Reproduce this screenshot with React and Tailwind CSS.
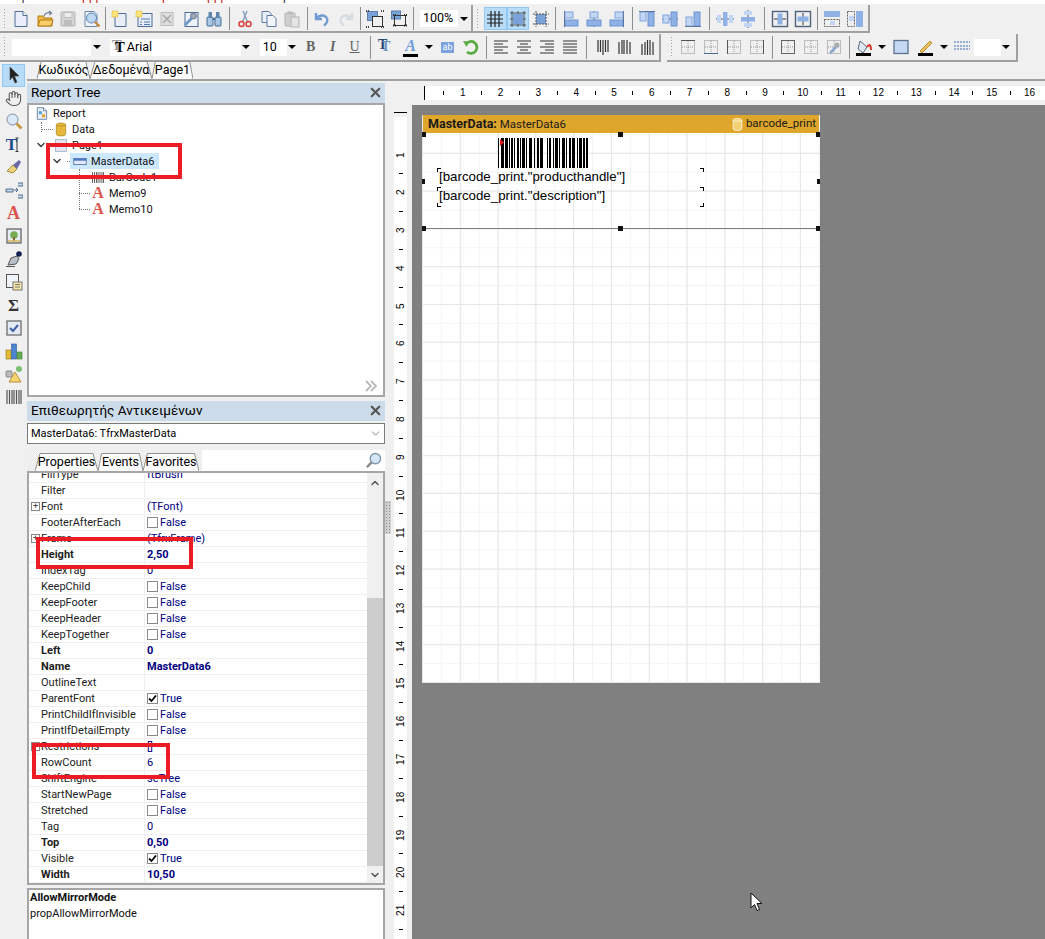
import React from 'react';
import { X, ChevronDown, ChevronUp, Hand } from 'lucide-react';

const SANS = "font-['Roboto',sans-serif]";
const ARIAL = "font-['Liberation_Sans',Arial,sans-serif]";
const SERIF = "font-['Liberation_Serif',serif]";

const Svg = ({ s = 18, children }) => (
    <svg width={s} height={s} viewBox="0 0 18 18" fill="none">{children}</svg>
);

const Page = ({ c = '#4f6d94', f = '#e9eefa' }) => (
    <>
        <path d="M3 1.5h8l4 4v11H3z" fill={f} stroke={c} />
        <path d="M11 1.5v4h4" fill="#fff" stroke={c} />
    </>
);

const Frame = ({ l, r, t, b, m }) => (
    <>
        <rect x="2.5" y="2.5" width="13" height="13" stroke="#888" strokeDasharray="1 1" />
        <path d="M9 3v12M3 9h12" stroke="#999" strokeDasharray="1 1" />
        {l && <path d="M2.5 2v14" stroke="#555" />}
        {r && <path d="M15.5 2v14" stroke="#555" />}
        {t && <path d="M2 2.5h14" stroke="#555" />}
        {b && <path d="M2 15.5h14" stroke="#4a6a94" />}
        {m && <rect x="2.5" y="2.5" width="13" height="13" stroke="#666" />}
    </>
);

// all toolbar and palette drawings
const icons = {
    new: <Page />,
    open: (
        <>
            <path d="M2 6h5l1 2h8v8H2z" fill="#f3bb45" stroke="#b37a12" />
            <path d="M2 16l2-6h13l-2 6z" fill="#f8cf6c" stroke="#b37a12" />
            <path d="M8 6c1-3 4-4 7-3M13 1l2.500 2-2 2" stroke="#6d7f97" strokeWidth="1.200" />
        </>
    ),
    save: (
        <>
            <rect x="2" y="2" width="14" height="14" rx="1" fill="#d4d4d4" stroke="#b4b4b4" />
            <rect x="5" y="2.500" width="8" height="5" fill="#ececec" stroke="#bbb" />
            <rect x="5" y="10" width="8" height="6" fill="#bdbdbd" />
        </>
    ),
    preview: (
        <>
            <path d="M2 1.500h9l3 3v12H2z" fill="#eef2fb" stroke="#6d86a8" />
            <circle cx="8.500" cy="8" r="5" fill="#bcd7f2" stroke="#5a82ad" />
            <path d="M12 12l4.500 4.500" stroke="#c9853a" strokeWidth="2.400" />
        </>
    ),
    pageNew: (
        <>
            <path d="M4 3.500h11v13H4z" fill="#e9eefa" stroke="#4f6d94" />
            <rect x="1" y="1" width="6" height="6" fill="#fbe27a" stroke="#d7b52c" strokeDasharray="1 1" />
        </>
    ),
    dialog: (
        <>
            <rect x="3" y="3.500" width="14" height="13" fill="#e9eefa" stroke="#4f6d94" />
            <rect x="1" y="1" width="6" height="6" fill="#fbe27a" stroke="#d7b52c" strokeDasharray="1 1" />
            <path d="M6 9h9M9 12h6M9 14.500h6M5 12h2M5 14.500h2" stroke="#4f7db0" />
        </>
    ),
    delPage: (
        <>
            <rect x="3" y="2.500" width="12" height="13" fill="#dedede" stroke="#bcbcbc" />
            <path d="M5 5l8 8M13 5l-8 8" stroke="#a8a8a8" strokeWidth="1.500" />
        </>
    ),
    wrench: (
        <>
            <rect x="3" y="2.500" width="13" height="14" fill="#eef2fb" stroke="#4f6d94" />
            <path d="M3 15l7-7" stroke="#6b96c7" strokeWidth="2.600" />
            <circle cx="11.500" cy="6" r="3" fill="#9fa8b4" stroke="#6d7f97" />
        </>
    ),
    find: (
        <>
            <rect x="2" y="7" width="6" height="9" rx="1" fill="#a9c8e8" stroke="#45698f" />
            <rect x="10" y="7" width="6" height="9" rx="1" fill="#a9c8e8" stroke="#45698f" />
            <rect x="3.500" y="2" width="3.500" height="6" fill="#5f86b0" />
            <rect x="11" y="2" width="3.500" height="6" fill="#5f86b0" />
            <path d="M8 9h2" stroke="#45698f" strokeWidth="2" />
        </>
    ),
    cut: (
        <>
            <path d="M11 1L6.500 12M7 1l4.500 11" stroke="#8da2bc" strokeWidth="1.500" />
            <circle cx="5.500" cy="14" r="2.500" stroke="#d8403a" strokeWidth="1.500" />
            <circle cx="12.500" cy="14" r="2.500" stroke="#d8403a" strokeWidth="1.500" />
        </>
    ),
    copy: (
        <>
            <path d="M2 1.500h7l2 2v9H2z" fill="#e9eefa" stroke="#5d7ba1" />
            <path d="M7 5.500h6l3 3v8H7z" fill="#f2f5fc" stroke="#5d7ba1" />
        </>
    ),
    paste: (
        <>
            <rect x="2" y="3" width="10" height="13" rx="1" fill="#cfcfcf" stroke="#b2b2b2" />
            <rect x="4.500" y="1.500" width="5" height="3" fill="#bbb" />
            <rect x="8" y="7" width="8" height="10" fill="#e4e4e4" stroke="#b4b4b4" />
        </>
    ),
    undo: <path d="M3 3v6h6M3.500 8.500C6 5 11 4.500 13.500 7.500c2 2.500.5 6-2.500 8" stroke="#6f9bd4" strokeWidth="2.400" />,
    redo: <path d="M15 3v6H9M14.500 8.500C12 5 7 4.500 4.500 7.500c-2 2.500-.5 6 2.500 8" stroke="#d6dbe0" strokeWidth="2.400" />,
    group: (
        <>
            <rect x="1.500" y="1.500" width="10" height="9" fill="#7ba2d8" stroke="#5b7fae" />
            <rect x="6.500" y="6.500" width="10" height="10" fill="#f0f0f0" stroke="#333" />
            <path d="M0 1h3M0 17h3M15 1h3M15 17h3" stroke="#444" strokeWidth="2" strokeDasharray="1 1" />
        </>
    ),
    ungroup: (
        <>
            <rect x="1.500" y="1" width="9" height="8" fill="#7ba2d8" stroke="#5b7fae" />
            <rect x="4.500" y="5.500" width="11" height="10" stroke="#333" />
            <path d="M3 5h3M14 5h3M3 15.500h3M14 15.500h3" stroke="#333" strokeWidth="2" strokeDasharray="1 1" />
        </>
    ),
    grid: <path d="M5 1v16M9 1v16M13 1v16M1 5h16M1 9h16M1 13h16" stroke="#222" strokeWidth="1.200" />,
    gridFit: (
        <>
            <rect x="4" y="4" width="10" height="10" fill="#7ba2d8" />
            <path d="M1 3h16M1 15h16M3 1v16M15 1v16" stroke="#333" strokeWidth=".8" />
            <path d="M9 1v3M9 14v3M1 9h3M14 9h3" stroke="#555" />
        </>
    ),
    gridAlign: (
        <>
            <rect x="4" y="4" width="10" height="10" fill="#7ba2d8" />
            <path d="M1 4h16M1 14h16M4 1v16M14 1v16" stroke="#555" strokeDasharray="2 1" />
        </>
    ),
    alLeft: (
        <>
            <path d="M2.500 1v16" stroke="#4a5a70" />
            <rect x="3" y="2" width="8" height="6" fill="#c3d6f3" stroke="#7fa3dc" />
            <rect x="3" y="10" width="13" height="6" fill="#8fb1e6" stroke="#6b92d0" />
        </>
    ),
    alCenter: (
        <>
            <path d="M9 1v16" stroke="#4a5a70" />
            <rect x="5" y="2" width="8" height="6" fill="#c3d6f3" stroke="#7fa3dc" />
            <rect x="2" y="10" width="14" height="6" fill="#8fb1e6" stroke="#6b92d0" />
        </>
    ),
    alRight: (
        <>
            <path d="M15.500 1v16" stroke="#4a5a70" />
            <rect x="7" y="2" width="8" height="6" fill="#c3d6f3" stroke="#7fa3dc" />
            <rect x="2" y="10" width="13" height="6" fill="#8fb1e6" stroke="#6b92d0" />
        </>
    ),
    alTop: (
        <>
            <path d="M1 1.500h16" stroke="#4a5a70" />
            <rect x="2" y="2" width="6" height="9" fill="#c3d6f3" stroke="#7fa3dc" />
            <rect x="10" y="2" width="6" height="14" fill="#8fb1e6" stroke="#6b92d0" />
        </>
    ),
    alMid: (
        <>
            <path d="M1 9h16" stroke="#4a5a70" />
            <rect x="2" y="5" width="6" height="8" fill="#c3d6f3" stroke="#7fa3dc" />
            <rect x="10" y="2" width="6" height="14" fill="#8fb1e6" stroke="#6b92d0" />
        </>
    ),
    alBottom: (
        <>
            <path d="M1 16.500h16" stroke="#4a5a70" />
            <rect x="2" y="7" width="6" height="9" fill="#c3d6f3" stroke="#7fa3dc" />
            <rect x="10" y="2" width="6" height="14" fill="#8fb1e6" stroke="#6b92d0" />
        </>
    ),
    spaceH: (
        <>
            <path d="M0 9h18" stroke="#4a5a70" />
            <rect x="1" y="5" width="4" height="8" fill="#c3d6f3" />
            <rect x="7" y="2" width="4.500" height="14" fill="#8fb1e6" />
            <rect x="13" y="5" width="4" height="8" fill="#c3d6f3" />
        </>
    ),
    spaceV: (
        <>
            <path d="M9 0v18" stroke="#4a5a70" />
            <rect x="5" y="1" width="8" height="4" fill="#c3d6f3" />
            <rect x="2" y="7" width="14" height="4.500" fill="#8fb1e6" />
            <rect x="5" y="13" width="8" height="4" fill="#c3d6f3" />
        </>
    ),
    centerH: (
        <>
            <rect x="1.500" y="1.500" width="15" height="15" stroke="#4f6378" strokeWidth="1.400" />
            <path d="M3 9h12" stroke="#333" />
            <rect x="6.500" y="3.500" width="5" height="11" fill="#8fb1e6" />
        </>
    ),
    centerV: (
        <>
            <rect x="1.500" y="1.500" width="15" height="15" stroke="#4f6378" strokeWidth="1.400" />
            <path d="M9 3v12" stroke="#333" />
            <rect x="3.500" y="6.500" width="11" height="5" fill="#8fb1e6" />
        </>
    ),
    sameW: (
        <>
            <rect x="1" y="1" width="16" height="6" fill="#8fb1e6" />
            <rect x="1.500" y="9.500" width="15" height="7" stroke="#666" strokeDasharray="2 1" />
            <rect x="7" y="11" width="5" height="4" fill="#c3d6f3" />
        </>
    ),
    sameH: (
        <>
            <rect x="10" y="1" width="7" height="16" fill="#8fb1e6" />
            <rect x="1.500" y="1.500" width="7" height="15" stroke="#666" strokeDasharray="2 1" />
            <rect x="3" y="6" width="5" height="5" fill="#c3d6f3" />
        </>
    ),
    refresh: (
        <>
            <path d="M4 6a6 6 0 1 1 1 8" stroke="#5bab45" strokeWidth="2.800" />
            <path d="M1 3l6 .5L4.500 9z" fill="#5bab45" />
        </>
    ),
    left: <path d="M2 3h14M2 6h9M2 9h14M2 12h9M2 15h14" stroke="#333" />,
    center: <path d="M2 3h14M5 6h8M2 9h14M5 12h8M2 15h14" stroke="#333" />,
    right: <path d="M2 3h14M7 6h9M2 9h14M7 12h9M2 15h14" stroke="#333" />,
    justify: <path d="M2 3h14M2 6h14M2 9h14M2 12h14M2 15h14" stroke="#333" />,
    bars1: <path d="M4 2v12M6.500 2v12M9 2v15M11.500 2v12M14 2v12" stroke="#333" strokeWidth="1.200" />,
    bars2: <path d="M3 4v12M6 2v14M8 2v14M11 2v14M14 4v12" stroke="#333" strokeWidth="1.200" />,
    bars3: <path d="M3 6v11M6 4v13M8.500 2v15M11 2v15M14 4v13" stroke="#333" strokeWidth="1.200" />,
    fTop: <Frame t />,
    fBottom: <Frame b />,
    fLeft: <Frame l />,
    fRight: <Frame r />,
    fAll: <Frame m />,
    fNone: <Frame />,
    fEdit: (
        <>
            <Frame />
            <path d="M5 15l6-6" stroke="#8aa8cc" strokeWidth="2.600" />
            <circle cx="12" cy="7" r="2.500" fill="#a8a8a8" />
        </>
    ),
    fill: (
        <>
            <path d="M5 3l7 6-4 6-5-4z" fill="#dfe7f2" stroke="#5a6a80" />
            <path d="M12 9c3-4 4-1 4 3" stroke="#d83a2a" strokeWidth="2" />
            <rect x="1" y="15" width="15" height="3" fill="#000" />
        </>
    ),
    shadow: <rect x="2" y="2.500" width="14" height="13" fill="#c5d8f2" stroke="#5a7391" strokeWidth="1.300" />,
    pen: (
        <>
            <path d="M3 13L13 3l2 2L5 15z" fill="#e7c05c" stroke="#b8923a" />
            <rect x="1" y="15" width="15" height="3" fill="#000" />
        </>
    ),
    lines: <path d="M1 4h16M1 8h16M1 11h16" stroke="#3f6db3" strokeDasharray="2 1" />,
    barcode: <path d="M2 2v14M4.500 2v14M7 2v14M9 2v14M11.500 2v14M14 2v14M16 2v14" stroke="#555" strokeWidth="1.200" />,
};

const paletteIcons = [
    <path d="M5 1l9 9H9.500l2.500 6-2 1-2.500-6L5 14z" fill="#222" stroke="#444" strokeWidth=".6" />,
    'hand',
    <>
        <circle cx="7.500" cy="7.500" r="5.500" fill="#dce9f6" stroke="#7b8b9c" />
        <path d="M11.500 11.500l5 5" stroke="#c59a3e" strokeWidth="2.600" />
    </>,
    <path d="M14 3v13M12.500 3h3M12.500 16.500h3" stroke="#333" />,
    <>
        <path d="M2 13l6-6 4 4-4 4z" fill="#efd179" stroke="#a98f3c" />
        <path d="M8 7l6-5 2 2-4 7z" fill="#6a6aa8" />
    </>,
    <path d="M1 8h7v3H1zM9 9h3M11 7l2 2-2 2M13 2h5v3h-5M13 14h5v3h-5" stroke="#3f6280" fill="#c8d7ea" strokeWidth=".9" />,
    null,
    <>
        <rect x="2" y="2" width="14" height="14" fill="#e5ecf5" stroke="#666" strokeWidth="1.300" />
        <circle cx="9" cy="8" r="3.800" fill="#76ad4f" />
        <rect x="8" y="10" width="2" height="4" fill="#8a6a2f" />
        <path d="M3 14h12" stroke="#d7b858" strokeWidth="1.500" />
    </>,
    <>
        <path d="M3 15l3-7 6-2 2 3-3 5z" fill="#b9bfc8" stroke="#555" />
        <circle cx="14" cy="4" r="2.800" fill="#14204f" />
        <path d="M1 16.500h9" stroke="#555" />
    </>,
    <>
        <rect x="1.500" y="1.500" width="12" height="13" fill="#f0f3fa" stroke="#555" />
        <rect x="8" y="9" width="9" height="8" fill="#f5e8a6" stroke="#777" />
        <path d="M10 11.500h5M10 14h5" stroke="#777" />
    </>,
    null,
    <>
        <rect x="2" y="2" width="14" height="14" fill="#e4eaf4" stroke="#6d6d6d" strokeWidth="1.300" />
        <path d="M5 9l3 3 5-6" stroke="#3d5fa8" strokeWidth="2" />
    </>,
    <>
        <rect x="1" y="8" width="5" height="9" fill="#e2bb32" stroke="#8d7520" strokeWidth=".6" />
        <rect x="6.500" y="2" width="5" height="15" fill="#4c84d0" stroke="#2d5a9a" strokeWidth=".6" />
        <rect x="12" y="10" width="5" height="7" fill="#63ac55" stroke="#3a7a33" strokeWidth=".6" />
    </>,
    <>
        <rect x="1" y="6" width="6" height="6" rx="1" fill="#bbb" stroke="#888" />
        <circle cx="14" cy="4" r="3" fill="#7cbf72" />
        <path d="M10 7l6 10H4z" fill="#f6d46e" stroke="#b8923a" />
    </>,
    icons.barcode,
];

const Btn = ({ name, w = 'w-[23.5px]', on, children }) => (
    <div className={`h-[23px] shrink-0 flex items-center justify-center ${w} ${on ? 'bg-[#b8dcf8] border border-[#90c8f6]' : ''}`}>
        {children || <Svg>{icons[name]}</Svg>}
    </div>
);

const Sep = ({ w }) => (
    <div className={`h-[23px] shrink-0 flex justify-center ${w}`}>
        <div className="w-px h-full bg-[#8e8e8e]" />
    </div>
);

const Grip = ({ className }) => (
    <div className={`h-[22px] w-[3px] shrink-0 bg-[radial-gradient(#a8a8a8_1px,transparent_1px)] bg-[size:3px_3px] ${className}`} />
);

const Arrow = ({ w = 'w-[11px]', bg = '' }) => (
    <div className={`h-full shrink-0 flex items-center justify-center ${w} ${bg}`}>
        <div className="w-0 h-0 border-x-[4px] border-x-transparent border-t-[4px] border-t-black" />
    </div>
);

const Combo = ({ w, text, children }) => (
    <div className={`h-[17px] shrink-0 bg-white flex items-center justify-between text-[12.500px] text-black ${w}`}>
        <div className="flex items-center pl-[3px]">
            {children}
            {text}
        </div>
        <Arrow bg="bg-[#f0f0f0]" />
    </div>
);

const ToolbarTop = () => (
    <div className="h-[29px] flex items-start shrink-0">
        <div className="h-[28px] w-[473px] pt-[1px] flex items-center border-b-2 border-r-2 border-[#a0a0a0] shrink-0">
            <Grip className="ml-[3px] mr-[3.250px]" />
            <Btn name="new" /><Btn name="open" /><Btn name="save" /><Btn name="preview" />
            <Sep w="w-[5px]" />
            <Btn name="pageNew" /><Btn name="dialog" /><Btn name="delPage" /><Btn name="wrench" /><Btn name="find" />
            <Sep w="w-[7.500px]" />
            <Btn name="cut" /><Btn name="copy" /><Btn name="paste" />
            <Sep w="w-[6.500px]" />
            <Btn name="undo" /><Btn name="redo" />
            <Sep w="w-[6px]" />
            <Btn name="group" /><Btn name="ungroup" />
            <Sep w="w-[5.500px]" />
            <div className="ml-[4.250px]">
                <Combo w="w-[49px]" text="100%" />
            </div>
        </div>
        <div className="h-[28px] w-[397px] pt-[1px] flex items-center border-b-2 border-r-2 border-[#a0a0a0] shrink-0">
            <Grip className="ml-[3px] mr-[5px]" />
            <Btn name="grid" w="w-[22.700px]" on /><Btn name="gridFit" w="w-[22.700px]" on /><Btn name="gridAlign" w="w-[22.700px]" />
            <Sep w="w-[7.800px]" />
            <Btn name="alLeft" w="w-[23px]" /><Btn name="alCenter" w="w-[23px]" /><Btn name="alRight" w="w-[23px]" />
            <Sep w="w-[7px]" />
            <Btn name="alTop" w="w-[23px]" /><Btn name="alMid" w="w-[23px]" /><Btn name="alBottom" w="w-[23px]" />
            <Sep w="w-[9px]" />
            <Btn name="spaceH" w="w-[23px]" /><Btn name="spaceV" w="w-[23px]" />
            <Sep w="w-[9px]" />
            <Btn name="centerH" w="w-[23px]" /><Btn name="centerV" w="w-[23px]" />
            <Sep w="w-[6px]" />
            <Btn name="sameW" w="w-[23px]" /><Btn name="sameH" w="w-[23px]" />
        </div>
    </div>
);

const Text = ({ className, children }) => (
    <span className={`${SERIF} font-bold leading-none ${className}`}>{children}</span>
);

const ToolbarFormat = () => (
    <div className="h-[28px] flex items-start shrink-0">
        <div className="h-[28px] w-[661px] flex items-center border-b-2 border-r-2 border-[#a0a0a0] shrink-0">
            <Grip className="ml-[3px] mr-[6px]" />
            <Combo w="w-[90px]" />
            <div className="w-[8px]" />
            <Combo w="w-[142px]" text="Arial">
                <Text className="text-[15px] text-black mr-[2px] ml-[2px] [text-shadow:-3px_-2px_0_#999]">T</Text>
            </Combo>
            <div className="w-[8px]" />
            <Combo w="w-[38px]" text="10" />
            <div className="w-[2px]" />
            <Btn w="w-[22px]"><Text className="text-[14px] text-[#666]">B</Text></Btn>
            <Btn w="w-[22px]"><Text className="text-[14px] italic text-[#666]">I</Text></Btn>
            <Btn w="w-[22px]"><span className={`${SERIF} text-[14px] leading-none underline text-[#666]`}>U</span></Btn>
            <Sep w="w-[9px]" />
            <Btn w="w-[22px]"><Text className="text-[14px] text-[#6b93c0] [text-shadow:-3px_-2px_0_#24466e]">T</Text></Btn>
            <div className="w-[3px]" />
            <Btn w="w-[22px]">
                <div className="flex flex-col items-center">
                    <Text className="text-[16px] italic text-[#6f9bd8]">A</Text>
                    <div className="w-[15px] h-[3px] bg-black" />
                </div>
            </Btn>
            <Arrow w="w-[14px]" />
            <div className="w-[1px]" />
            <Btn w="w-[22px]">
                <div className={`w-[13px] h-[11px] bg-[#7ba2e0] text-white text-[9px] leading-[10px] text-center ${SANS}`}>ab</div>
            </Btn>
            <div className="w-[2px]" />
            <Btn name="refresh" w="w-[22px]" />
            <Sep w="w-[7.500px]" />
            <Btn name="left" w="w-[23px]" /><Btn name="center" w="w-[23px]" /><Btn name="right" w="w-[23px]" /><Btn name="justify" w="w-[23px]" />
            <Sep w="w-[9.500px]" />
            <Btn name="bars1" w="w-[22.500px]" /><Btn name="bars2" w="w-[22.500px]" /><Btn name="bars3" w="w-[22.500px]" />
        </div>
        <div className="w-[6px] h-[27px] shrink-0" />
        <div className="h-[28px] w-[351px] flex items-center border-b-2 border-r-2 border-[#a0a0a0] shrink-0">
            <Grip className="ml-[3px] mr-[3.500px]" />
            <Btn name="fTop" w="w-[23px]" /><Btn name="fBottom" w="w-[23px]" /><Btn name="fLeft" w="w-[23px]" /><Btn name="fRight" w="w-[23px]" />
            <Sep w="w-[8px]" />
            <Btn name="fAll" w="w-[23px]" /><Btn name="fNone" w="w-[23px]" /><Btn name="fEdit" w="w-[23px]" />
            <Sep w="w-[7px]" />
            <Btn name="fill" w="w-[23px]" />
            <Arrow w="w-[13px]" />
            <div className="w-[1px]" />
            <Btn name="shadow" w="w-[23px]" />
            <div className="w-[2px]" />
            <Btn name="pen" w="w-[23px]" />
            <Arrow w="w-[12px]" />
            <div className="w-[1px]" />
            <Btn name="lines" w="w-[23px]" />
            <Combo w="w-[38px]" />
        </div>
    </div>
);

const LeftBar = () => (
    <div className="w-[27px] shrink-0 flex flex-col items-center pt-[1.500px]">
        {paletteIcons.map((ic, i) => (
            <div key={i} className={`w-[23px] h-[23px] shrink-0 flex items-center justify-center ${i === 0 ? 'bg-[#b8dcf8] border border-[#90c8f6]' : ''}`}>
                {i === 3 && <Text className="text-[17px] text-[#1f4e8c] -mr-[14px]">T</Text>}
                {i === 6 && <Text className="text-[18px] text-[#d9534f]">A</Text>}
                {i === 10 && <span className={`${SERIF} font-bold text-[17px] leading-none text-[#333]`}>Σ</span>}
                {ic === 'hand' && <Hand className="w-[17px] h-[17px] text-[#555]" strokeWidth={1.500} />}
                {ic && ic !== 'hand' && <Svg>{ic}</Svg>}
            </div>
        ))}
    </div>
);

const Tab = ({ w, children }) => (
    <div className={`relative h-[18px] shrink-0 flex items-center justify-center text-[12.500px] leading-none text-black ${w}`}>
        <svg className="absolute inset-0 w-full h-full" viewBox="0 0 100 18" preserveAspectRatio="none" fill="none">
            <path d="M0 18L8 .5H92L100 18" fill="#fbfbfb" stroke="#909090" vectorEffect="non-scaling-stroke" />
        </svg>
        <span className="relative">{children}</span>
    </div>
);

const PanelHeader = ({ children }) => (
    <div className="h-[20px] shrink-0 bg-[#ccdcea] flex items-center justify-between pl-[4px] pr-[2px] pb-[1px] text-[13.500px] leading-none text-black">
        <span>{children}</span>
        <X className="w-[15px] h-[15px] text-[#555]" strokeWidth={3.500} />
    </div>
);

const TreeRow = ({ pl, icon, label, sel, chevron }) => (
    <div className={`relative h-[16px] flex items-center text-[11px] leading-none text-[#111] ${pl}`}>
        {chevron && <ChevronDown className="absolute w-[12px] h-[12px] text-[#444] -ml-[19px]" strokeWidth={3} />}
        <div className={`flex items-center ${sel ? 'bg-[#cce8ff] h-[16px] pr-[5px] pl-[3px]' : ''}`}>
            <div className="w-[14px] h-[16px] flex items-center justify-center shrink-0 mr-[4px]">{icon}</div>
            <span>{label}</span>
        </div>
    </div>
);

const Dotted = ({ className }) => (
    <div className={`absolute border-[#777] border-dotted ${className}`} />
);

const RedBox = ({ className }) => (
    <div className={`absolute border-[4px] border-[#ed1c24] z-20 ${className}`} />
);

const TreeLetter = () => <span className={`${SERIF} font-bold text-[16px] leading-none text-[#d9534f]`}>A</span>;

const ReportTree = () => (
    <div className="relative h-[294px] shrink-0 bg-white border-2 border-[#a6a6a6]">
        <Dotted className="left-[12px] top-[17px] h-[10px] border-l" />
        <Dotted className="left-[12px] top-[24px] w-[12px] border-t" />
        <Dotted className="left-[38px] top-[56px] w-[5px] border-t" />
        <Dotted className="left-[50px] top-[64px] h-[40px] border-l" />
        <Dotted className="left-[50px] top-[72px] w-[11px] border-t" />
        <Dotted className="left-[50px] top-[88px] w-[11px] border-t" />
        <Dotted className="left-[50px] top-[104px] w-[11px] border-t" />
        <TreeRow
            pl="pl-[6px]"
            label="Report"
            icon={<Svg s={15}><Page /><rect x="5" y="6" width="4" height="4" fill="#5aa9d8" /><rect x="9" y="10" width="4" height="4" fill="#e8a32c" /></Svg>}
        />
        <TreeRow pl="pl-[25px]" label="Data" icon={<Svg s={17}><path d="M3 3c0-3 12-3 12 0v12c0 3-12 3-12 0z" fill="#e5b83b" stroke="#b08a22" /><path d="M3 3c0 2 12 2 12 0" stroke="#b08a22" /></Svg>} />
        <TreeRow pl="pl-[25px]" label="Page1" chevron icon={<Svg s={15}><rect x="2" y="1.500" width="14" height="15" fill="#e3e7f5" stroke="#9aa7c2" /></Svg>} />
        <TreeRow pl="pl-[41px]" label="MasterData6" sel chevron icon={<Svg s={15}><rect x="1" y="5" width="16" height="8" fill="#dfe8f8" stroke="#4a6a9c" /><rect x="1" y="5" width="16" height="3" fill="#4f7bc4" /></Svg>} />
        <TreeRow pl="pl-[62px]" label="BarCode1" icon={<Svg s={15}>{icons.barcode}</Svg>} />
        <TreeRow pl="pl-[62px]" label="Memo9" icon={<TreeLetter />} />
        <TreeRow pl="pl-[62px]" label="Memo10" icon={<TreeLetter />} />
        <svg className="absolute right-[6px] bottom-[3px]" width="12" height="12" viewBox="0 0 12 12" fill="none">
            <path d="M1 1l5 5-5 5M6 1l5 5-5 5" stroke="#b8b8b8" strokeWidth="1.800" />
        </svg>
    </div>
);

const props = [
    { n: 'FillType', v: 'ftBrush' },
    { n: 'Filter' },
    { n: 'Font', v: '(TFont)', plus: true },
    { n: 'FooterAfterEach', c: false },
    { n: 'Frame', v: '(TfrxFrame)', plus: true },
    { n: 'Height', v: '2,50', b: true },
    { n: 'IndexTag', v: '0' },
    { n: 'KeepChild', c: false },
    { n: 'KeepFooter', c: false },
    { n: 'KeepHeader', c: false },
    { n: 'KeepTogether', c: false },
    { n: 'Left', v: '0', b: true },
    { n: 'Name', v: 'MasterData6', b: true },
    { n: 'OutlineText' },
    { n: 'ParentFont', c: true },
    { n: 'PrintChildIfInvisible', c: false },
    { n: 'PrintIfDetailEmpty', c: false },
    { n: 'Restrictions', v: '[]', plus: true },
    { n: 'RowCount', v: '6' },
    { n: 'ShiftEngine', v: 'seTree' },
    { n: 'StartNewPage', c: false },
    { n: 'Stretched', c: false },
    { n: 'Tag', v: '0' },
    { n: 'Top', v: '0,50', b: true },
    { n: 'Visible', c: true },
    { n: 'Width', v: '10,50', b: true },
];

const PropRow = ({ p }) => (
    <div className={`h-[16px] flex items-center border-b border-[#efefef] text-[11px] leading-none ${p.b ? 'font-bold' : ''}`}>
        <div className="relative w-[116px] h-full shrink-0 flex items-center pl-[12px] text-[#222] border-r border-[#efefef]">
            {p.plus && (
                <div className="absolute left-[2px] w-[9px] h-[9px] border border-[#888] flex items-center justify-center text-[9px] leading-none text-[#444]">+</div>
            )}
            {p.n}
        </div>
        <div className="flex items-center pl-[2px] text-[#000080]">
            {p.c !== undefined && (
                <div className="w-[11px] h-[11px] border border-[#8a8a8a] bg-white mr-[2px] flex items-center justify-center">
                    {p.c && (
                        <svg width="9" height="9" viewBox="0 0 9 9" fill="none"><path d="M1 4.500l2.500 2.500L8 1.500" stroke="#000" strokeWidth="1.800" /></svg>
                    )}
                </div>
            )}
            {p.c !== undefined ? (p.c ? 'True' : 'False') : p.v}
        </div>
    </div>
);

const Inspector = () => (
    <>
        <PanelHeader>Επιθεωρητής Αντικειμένων</PanelHeader>
        <div className="mt-[2px] h-[21px] shrink-0 bg-white border border-[#7a7a7a] flex items-center justify-between pl-[3px] pr-[2px] text-[11px] leading-none text-black">
            <span>MasterData6: TfrxMasterData</span>
            <ChevronDown className="w-[13px] h-[13px] text-[#666]" strokeWidth={1.500} />
        </div>
        <div className="mt-[6px] h-[21px] shrink-0 flex">
            <div className="w-[175px] shrink-0 flex items-end pl-[8px] bg-[repeating-conic-gradient(#e8e8e8_0_25%,#f6f6f6_0_50%)] bg-[size:2px_2px]">
                <Tab w="w-[63px]">Properties</Tab>
                <Tab w="w-[45px]">Events</Tab>
                <Tab w="w-[56px]">Favorites</Tab>
            </div>
            <div className="flex-1 bg-white flex items-center justify-end pr-[3px]">
                <svg width="17" height="17" viewBox="0 0 18 18" fill="none">
                    <circle cx="11" cy="7" r="5.500" fill="#d5e6f6" stroke="#7f97ad" strokeWidth="1.500" />
                    <path d="M7 11l-5 5" stroke="#8a8a8a" strokeWidth="2.500" />
                </svg>
            </div>
        </div>
        <div className="relative h-[414px] shrink-0 bg-white border-2 border-[#a6a6a6] flex overflow-hidden">
            <div className="flex-1 -mt-[6px] min-w-0">
                {props.map((p) => <PropRow key={p.n} p={p} />)}
            </div>
            <div className="w-[16px] shrink-0 bg-[#f0f0f0] flex flex-col items-center">
                <ChevronUp className="w-[12px] h-[12px] mt-[4px] text-[#555]" strokeWidth={3} />
                <div className="w-full h-[268px] mt-[109px] bg-[#cdcdcd]" />
                <ChevronDown className="w-[12px] h-[12px] mt-[3px] text-[#555]" strokeWidth={3} />
            </div>
        </div>
        <div className="mt-[3px] flex-1 bg-white border-x-2 border-t-2 border-[#a6a6a6] pl-[1px] text-[11px] leading-[16px] text-[#111]">
            <div className="font-bold">AllowMirrorMode</div>
            <div>propAllowMirrorMode</div>
        </div>
    </>
);

const bars = [1, 2, 3, 1, 3, 1, 1, 1, 2, 1, 1, 2, 2, 1, 1, 1, 3, 1, 1, 2, 3, 2, 1, 2, 2, 1, 3, 4, 1, 1, 2, 2, 1, 1, 3, 1, 1, 2, 3, 1, 1, 2, 2, 1, 3, 2, 1, 1, 3, 1, 2, 1, 2];

const Barcode = () => {
    let x = 0;
    return (
        <svg className="absolute left-[76px] top-[23px]" width="90" height="30" viewBox="0 0 90 30">
            {bars.map((b, i) => {
                const r = i % 2 === 0 ? <rect key={i} x={x} y="0" width={b} height="30" fill="#000" /> : null;
                x += b;
                return r;
            })}
            <path d="M2 1l4 3.500-4 3.500z" fill="#e8121a" />
        </svg>
    );
};

const Handle = ({ className }) => <div className={`absolute bg-[#111] z-10 ${className}`} />;

const Corner = ({ className }) => <div className={`absolute w-[4px] h-[4px] border-black ${className}`} />;

const RulerH = () => {
    const cells = [];
    for (let i = 1; i <= 16; i++) {
        cells.push(
            <div key={`t${i}`} className="w-[18.900px] shrink-0 flex justify-center"><div className="w-px h-[4px] bg-black" /></div>,
            <div key={`n${i}`} className="w-[18.900px] shrink-0 text-center">{i}</div>,
        );
    }
    return (
        <div className={`ml-[30px] mt-[5px] h-[14px] bg-white border-l border-black flex items-center pl-[9.500px] overflow-hidden text-[10px] leading-none text-black ${ARIAL}`}>
            {cells}
        </div>
    );
};

const RulerV = () => {
    const cells = [];
    for (let i = 1; i <= 21; i++) {
        cells.push(
            <div key={`n${i}`} className="h-[18.900px] shrink-0 flex items-center justify-center [writing-mode:vertical-rl] rotate-180">{i}</div>,
            <div key={`t${i}`} className="h-[18.900px] shrink-0 flex items-center justify-center"><div className="w-[4px] h-px bg-black" /></div>,
        );
    }
    return (
        <div className={`mt-[12px] w-[13px] shrink-0 bg-white flex flex-col items-center overflow-hidden text-[10px] leading-none text-black pt-[28.500px] ${ARIAL}`}>
            <div className="absolute left-0 top-[31px] w-[13px] h-px bg-black" />
            {cells}
        </div>
    );
};

const ReportPage = () => (
    <div className={`relative ml-[10px] mt-[10px] w-[398px] h-[568px] bg-white ${ARIAL} bg-[linear-gradient(to_right,#e6e6e6_1px,transparent_1px),linear-gradient(to_bottom,#e6e6e6_1px,transparent_1px),linear-gradient(to_right,#f4f4f4_1px,transparent_1px),linear-gradient(to_bottom,#f4f4f4_1px,transparent_1px)] bg-[size:37.800px_37.800px,37.800px_37.800px,18.900px_18.900px,18.900px_18.900px]`}>
        <div className={`mx-[1px] mt-[1px] h-[18px] bg-[#dfa62c] flex items-center justify-between pl-[5px] pr-[3px] text-[11.500px] leading-none text-[#1a1a1a] ${SANS}`}>
            <span><b className="text-[12.500px]">MasterData:</b> MasterData6</span>
            <span className="flex items-center gap-[2px] text-[11.500px]">
                <Svg s={13}><path d="M3 3c0-3 12-3 12 0v12c0 3-12 3-12 0z" fill="#f3d071" stroke="#fff" /><path d="M3 3c0 2 12 2 12 0" stroke="#fff" /></Svg>
                barcode_print
            </span>
        </div>
        <Barcode />
        <div className="absolute left-[17px] top-[53px] text-[13.300px] leading-[18.500px] text-black whitespace-nowrap">
            <div>[barcode_print."producthandle"]</div>
            <div>[barcode_print."description"]</div>
        </div>
        <Corner className="left-[15px] top-[53px] border-t border-l" />
        <Corner className="left-[15px] top-[72px] border-t border-l" />
        <Corner className="left-[15px] top-[88px] border-b border-l" />
        <Corner className="left-[278px] top-[53px] border-t border-r" />
        <Corner className="left-[278px] top-[72px] border-t border-r" />
        <Corner className="left-[278px] top-[88px] border-b border-r" />
        <div className="absolute left-[1px] right-[1px] top-[113px] h-px bg-[#808080]" />
        <Handle className="left-[0px] top-[17px] w-[4px] h-[5px] bg-[#2a4aa8]" />
        <Handle className="left-[196px] top-[17px] w-[5px] h-[5px] bg-[#2a4aa8]" />
        <Handle className="right-[0px] top-[17px] w-[4px] h-[5px] bg-[#2a4aa8]" />
        <Handle className="left-[0px] top-[64px] w-[3px] h-[5px]" />
        <Handle className="right-[0px] top-[64px] w-[3px] h-[5px]" />
        <Handle className="left-[0px] top-[111px] w-[4px] h-[5px]" />
        <Handle className="left-[196px] top-[111px] w-[5px] h-[5px]" />
        <Handle className="right-[0px] top-[111px] w-[4px] h-[5px]" />
    </div>
);

const Cursor = () => (
    <svg className="absolute left-[750px] top-[892px] z-20" width="14" height="20" viewBox="0 0 14 20" fill="none">
        <path d="M1 1v15l3.500-3.500L7 18.500l2.500-1L7 11.500h5z" fill="#fff" stroke="#111" />
    </svg>
);

const clipped = [
    { t: 'γ', w: 'w-[62px]', c: 'text-[#333]' },
    { t: 'ρρρ', w: 'w-[80px]', c: 'text-[#c01818]' },
    { t: 'ρ', w: 'w-[45px]', c: 'text-[#c01818]' },
    { t: 'ρρρ', w: 'w-[76px]', c: 'text-[#c01818]' },
    { t: 'ρ', w: 'w-[20px]', c: 'text-[#333]' },
];

export default function App() {
    return (
        <div className={`relative w-[1045px] h-[939px] overflow-hidden bg-[#f0f0f0] flex flex-col ${SANS}`}>
            <div className="h-[4px] shrink-0 bg-white overflow-hidden pl-[20px] flex text-[12px] leading-none whitespace-nowrap">
                {clipped.map((c, i) => (
                    <div key={i} className={`-mt-[10px] shrink-0 ${c.w} ${c.c}`}>{c.t}</div>
                ))}
            </div>
            <div className="h-[1px] shrink-0" />
            <ToolbarTop />
            <ToolbarFormat />
            <div className="flex-1 flex min-h-0">
                <LeftBar />
                <div className="flex-1 flex flex-col min-w-0">
                    <div className="h-[19px] shrink-0 flex items-end pl-[10px] border-b-2 border-[#a0a0a0] bg-[repeating-conic-gradient(#ececec_0_25%,#f5f5f5_0_50%)] bg-[size:2px_2px]">
                        <Tab w="w-[53px]">Κωδικός</Tab>
                        <Tab w="w-[62px]">Δεδομένα</Tab>
                        <Tab w="w-[41px]">Page1</Tab>
                    </div>
                    <div className="flex-1 flex min-h-0">
                        <div className="w-[358px] shrink-0 flex flex-col pt-[2px]">
                            <PanelHeader>Report Tree</PanelHeader>
                            <ReportTree />
                            <div className="h-[4px] shrink-0" />
                            <Inspector />
                        </div>
                        <div className="relative w-[9px] shrink-0">
                            <div className="absolute left-0 top-[420px] w-[6px] h-[33px] bg-[#d0d0d0] bg-[radial-gradient(#8a8a8a_1px,transparent_1px)] bg-[size:3px_3px]" />
                        </div>
                        <div className="relative flex-1 flex flex-col min-w-0">
                            <RulerH />
                            <div className="flex-1 flex min-h-0 mt-[5px]">
                                <RulerV />
                                <div className="w-[5px] shrink-0" />
                                <div className="flex-1 bg-[#808080]">
                                    <ReportPage />
                                </div>
                            </div>
                        </div>
                    </div>
                </div>
            </div>
            <RedBox className="left-[46px] top-[143px] w-[136px] h-[36px]" />
            <RedBox className="left-[36px] top-[537px] w-[157px] h-[32px]" />
            <RedBox className="left-[32px] top-[743px] w-[138px] h-[36px]" />
            <Cursor />
        </div>
    );
}
